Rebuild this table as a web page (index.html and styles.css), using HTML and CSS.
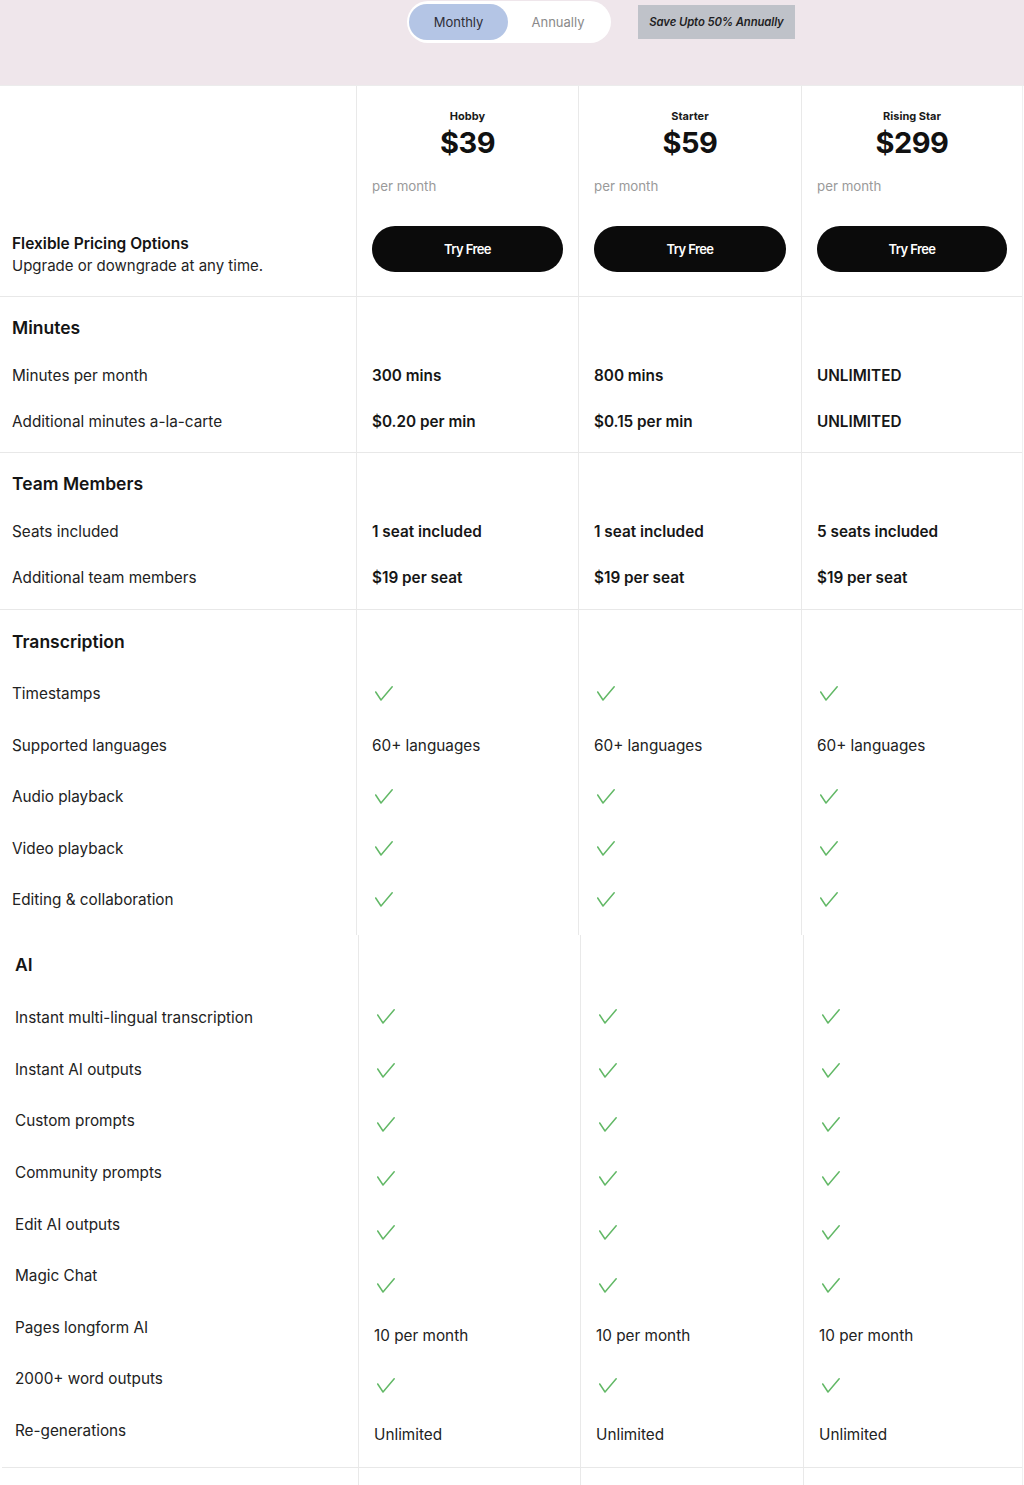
FILE: index.html
```html
<!DOCTYPE html>
<html lang="en">
<head>
<meta charset="utf-8">
<title>Pricing</title>
<link rel="stylesheet" href="styles.css">
</head>
<body>
<svg width="0" height="0" class="defs" aria-hidden="true">
  <symbol id="chk" viewBox="0 0 18 15">
    <polyline points="0.7,6 6,14 17.2,0.8" fill="none" stroke="currentColor" stroke-width="1.5" stroke-linecap="round" stroke-linejoin="round"/>
  </symbol>
</svg>

<div class="band">
  <div class="toggle-wrap">
    <div class="toggle">
      <span class="opt active">Monthly</span>
      <span class="opt">Annually</span>
    </div>
    <div class="save">Save Upto 50% Annually</div>
  </div>
</div>

<div class="table">
  <div class="grid hdr">
    <div class="col intro">
      <div class="intro-title">Flexible Pricing Options</div>
      <div class="intro-sub">Upgrade or downgrade at any time.</div>
    </div>
    <div class="col plan">
      <div class="plan-name">Hobby</div>
      <div class="plan-price">$39</div>
      <div class="plan-per">per month</div>
      <a class="btn">Try Free</a>
    </div>
    <div class="col plan">
      <div class="plan-name">Starter</div>
      <div class="plan-price">$59</div>
      <div class="plan-per">per month</div>
      <a class="btn">Try Free</a>
    </div>
    <div class="col plan">
      <div class="plan-name">Rising Star</div>
      <div class="plan-price">$299</div>
      <div class="plan-per">per month</div>
      <a class="btn">Try Free</a>
    </div>
  </div>

  <div class="grid sec sec-min">
    <div class="col labels">
      <div class="sec-title">Minutes</div>
      <div class="row">Minutes per month</div>
      <div class="row">Additional minutes a-la-carte</div>
    </div>
    <div class="col vals bold">
      <div class="row">300 mins</div>
      <div class="row">$0.20 per min</div>
    </div>
    <div class="col vals bold">
      <div class="row">800 mins</div>
      <div class="row">$0.15 per min</div>
    </div>
    <div class="col vals bold">
      <div class="row">UNLIMITED</div>
      <div class="row">UNLIMITED</div>
    </div>
  </div>

  <div class="grid sec sec-team">
    <div class="col labels">
      <div class="sec-title">Team Members</div>
      <div class="row">Seats included</div>
      <div class="row">Additional team members</div>
    </div>
    <div class="col vals bold">
      <div class="row">1 seat included</div>
      <div class="row">$19 per seat</div>
    </div>
    <div class="col vals bold">
      <div class="row">1 seat included</div>
      <div class="row">$19 per seat</div>
    </div>
    <div class="col vals bold">
      <div class="row">5 seats included</div>
      <div class="row">$19 per seat</div>
    </div>
  </div>

  <div class="grid sec sec-tr">
    <div class="col labels">
      <div class="sec-title">Transcription</div>
      <div class="row">Timestamps</div>
      <div class="row">Supported languages</div>
      <div class="row">Audio playback</div>
      <div class="row">Video playback</div>
      <div class="row">Editing &amp; collaboration</div>
    </div>
    <div class="col vals">
      <div class="row"><svg class="check"><use href="#chk"/></svg></div>
      <div class="row">60+ languages</div>
      <div class="row"><svg class="check"><use href="#chk"/></svg></div>
      <div class="row"><svg class="check"><use href="#chk"/></svg></div>
      <div class="row"><svg class="check"><use href="#chk"/></svg></div>
    </div>
    <div class="col vals">
      <div class="row"><svg class="check"><use href="#chk"/></svg></div>
      <div class="row">60+ languages</div>
      <div class="row"><svg class="check"><use href="#chk"/></svg></div>
      <div class="row"><svg class="check"><use href="#chk"/></svg></div>
      <div class="row"><svg class="check"><use href="#chk"/></svg></div>
    </div>
    <div class="col vals">
      <div class="row"><svg class="check"><use href="#chk"/></svg></div>
      <div class="row">60+ languages</div>
      <div class="row"><svg class="check"><use href="#chk"/></svg></div>
      <div class="row"><svg class="check"><use href="#chk"/></svg></div>
      <div class="row"><svg class="check"><use href="#chk"/></svg></div>
    </div>
  </div>
</div>

<div class="table table-ai">
  <div class="grid sec sec-ai">
    <div class="col labels">
      <div class="sec-title">AI</div>
      <div class="row">Instant multi-lingual transcription</div>
      <div class="row">Instant AI outputs</div>
      <div class="row">Custom prompts</div>
      <div class="row">Community prompts</div>
      <div class="row">Edit AI outputs</div>
      <div class="row">Magic Chat</div>
      <div class="row">Pages longform AI</div>
      <div class="row">2000+ word outputs</div>
      <div class="row">Re-generations</div>
    </div>
    <div class="col vals">
      <div class="item ic"><svg class="check"><use href="#chk"/></svg></div>
      <div class="item ic"><svg class="check"><use href="#chk"/></svg></div>
      <div class="item ic"><svg class="check"><use href="#chk"/></svg></div>
      <div class="item ic"><svg class="check"><use href="#chk"/></svg></div>
      <div class="item ic"><svg class="check"><use href="#chk"/></svg></div>
      <div class="item ic"><svg class="check"><use href="#chk"/></svg></div>
      <div class="item tx">10 per month</div>
      <div class="item ic"><svg class="check"><use href="#chk"/></svg></div>
      <div class="item tx">Unlimited</div>
    </div>
    <div class="col vals">
      <div class="item ic"><svg class="check"><use href="#chk"/></svg></div>
      <div class="item ic"><svg class="check"><use href="#chk"/></svg></div>
      <div class="item ic"><svg class="check"><use href="#chk"/></svg></div>
      <div class="item ic"><svg class="check"><use href="#chk"/></svg></div>
      <div class="item ic"><svg class="check"><use href="#chk"/></svg></div>
      <div class="item ic"><svg class="check"><use href="#chk"/></svg></div>
      <div class="item tx">10 per month</div>
      <div class="item ic"><svg class="check"><use href="#chk"/></svg></div>
      <div class="item tx">Unlimited</div>
    </div>
    <div class="col vals">
      <div class="item ic"><svg class="check"><use href="#chk"/></svg></div>
      <div class="item ic"><svg class="check"><use href="#chk"/></svg></div>
      <div class="item ic"><svg class="check"><use href="#chk"/></svg></div>
      <div class="item ic"><svg class="check"><use href="#chk"/></svg></div>
      <div class="item ic"><svg class="check"><use href="#chk"/></svg></div>
      <div class="item ic"><svg class="check"><use href="#chk"/></svg></div>
      <div class="item tx">10 per month</div>
      <div class="item ic"><svg class="check"><use href="#chk"/></svg></div>
      <div class="item tx">Unlimited</div>
    </div>
  </div>
  <div class="grid next">
    <div class="col"></div>
    <div class="col"></div>
    <div class="col"></div>
    <div class="col"></div>
  </div>
</div>
</body>
</html>
```

FILE: styles.css
```css
* { box-sizing: border-box; }

html, body {
  margin: 0;
  padding: 0;
  background: #ffffff;
}

body {
  font-family: Inter, "Liberation Sans", sans-serif;
  color: #1c1c1c;
  font-size: 15.3px;
  overflow: hidden;
}

.defs { position: absolute; }

/* top band */
.band {
  background: #efe6eb;
  height: 86px;
  border-bottom: 1px solid #ececec;
  display: flex;
  justify-content: center;
  padding-right: 6px;
}

.toggle-wrap {
  position: relative;
  height: 44px;
  margin-top: 1px;
}

.toggle {
  display: flex;
  background: #ffffff;
  border-radius: 22px;
  padding: 3px 3px 3px 2px;
  width: 204px;
  height: 42px;
}

.opt {
  flex: 1;
  display: flex;
  align-items: center;
  justify-content: center;
  font-size: 13px;
  color: #8a8a8a;
  border-radius: 19px;
}

.opt.active {
  background: #b4c5e5;
  color: #2d2d36;
  flex: 0 0 99px;
}

.save {
  position: absolute;
  left: 231px;
  top: 4px;
  width: 157px;
  height: 34px;
  background: #bfc2c9;
  display: flex;
  align-items: center;
  justify-content: center;
  font-size: 11.3px;
  font-style: italic;
  font-weight: 600;
  color: #1f1f24;
  letter-spacing: -0.1px;
}

/* tables */
.table {
  width: 1023px;
  border-right: 1px solid #f0f0f0;
}

.grid {
  display: grid;
  grid-template-columns: 356px 222px 223px 1fr;
}

.col + .col {
  border-left: 1px solid #e9e9e9;
}

.hdr {
  height: 211px;
  border-bottom: 1px solid #e8e8e8;
}

.intro {
  display: flex;
  flex-direction: column;
  justify-content: flex-end;
  padding: 0 12px 19px;
  line-height: 22px;
}

.intro-title {
  font-weight: 600;
  font-size: 15.5px;
  color: #141414;
}

.intro-sub {
  font-size: 15px;
  color: #1f1f1f;
}

.plan {
  display: flex;
  flex-direction: column;
  padding: 22px 15px 0 15px;
}

.plan-name {
  text-align: center;
  font-size: 11px;
  font-weight: 700;
  line-height: 16px;
  color: #1a1a1a;
}

.plan-price {
  text-align: center;
  font-size: 29px;
  font-weight: 700;
  line-height: 36px;
  letter-spacing: -0.5px;
  color: #111;
  margin-top: 1px;
}

.plan-per {
  font-size: 13.3px;
  color: #9a9a9a;
  line-height: 18px;
  margin-top: 16px;
}

.btn {
  margin-top: 31px;
  height: 46px;
  border-radius: 23px;
  background: #0b0b0b;
  color: #ffffff;
  display: flex;
  align-items: center;
  justify-content: center;
  font-size: 13px;
  font-weight: 600;
  letter-spacing: -0.6px;
}

/* sections */
.sec .col {
  display: flex;
  flex-direction: column;
}

.sec-title {
  font-size: 17.5px;
  font-weight: 600;
  line-height: 24px;
  padding-top: 19px;
  padding-bottom: 12px;
  color: #141414;
}

.labels {
  padding-left: 12px;
}

.vals {
  padding-left: 15px;
  padding-top: 55px;
}

.row {
  display: flex;
  align-items: center;
  height: 46px;
  color: #222;
}

.bold .row {
  font-weight: 600;
  color: #161616;
}

.sec-min, .sec-team {
  border-bottom: 1px solid #e8e8e8;
}

.sec-min .col {
  padding-bottom: 8px;
}

.sec-team .col {
  padding-bottom: 9px;
}

.sec-tr .row {
  height: 51.5px;
}

.sec-tr .sec-title {
  padding-top: 20px;
  padding-bottom: 14px;
}

.sec-tr .vals {
  padding-top: 58px;
}

.sec-tr .col {
  padding-bottom: 9.5px;
}

.check {
  width: 18px;
  height: 15px;
  color: #62b866;
  margin-left: 3px;
}

/* AI table */
.table-ai {
  margin-left: 2px;
  width: 1021px;
}

.sec-ai {
  border-bottom: 1px solid #e8e8e8;
}

.sec-ai .labels {
  padding-left: 13px;
  padding-bottom: 10.6px;
}

.sec-ai .sec-title {
  padding-top: 18px;
  padding-bottom: 15px;
}

.sec-ai .row {
  height: 51.6px;
}

.sec-ai .vals {
  padding-top: 55px;
}

.item {
  display: flex;
  align-items: center;
  color: #222;
}

.item.ic { height: 53.8px; }
.item.tx { height: 45.5px; }

.next {
  height: 40px;
}
```
